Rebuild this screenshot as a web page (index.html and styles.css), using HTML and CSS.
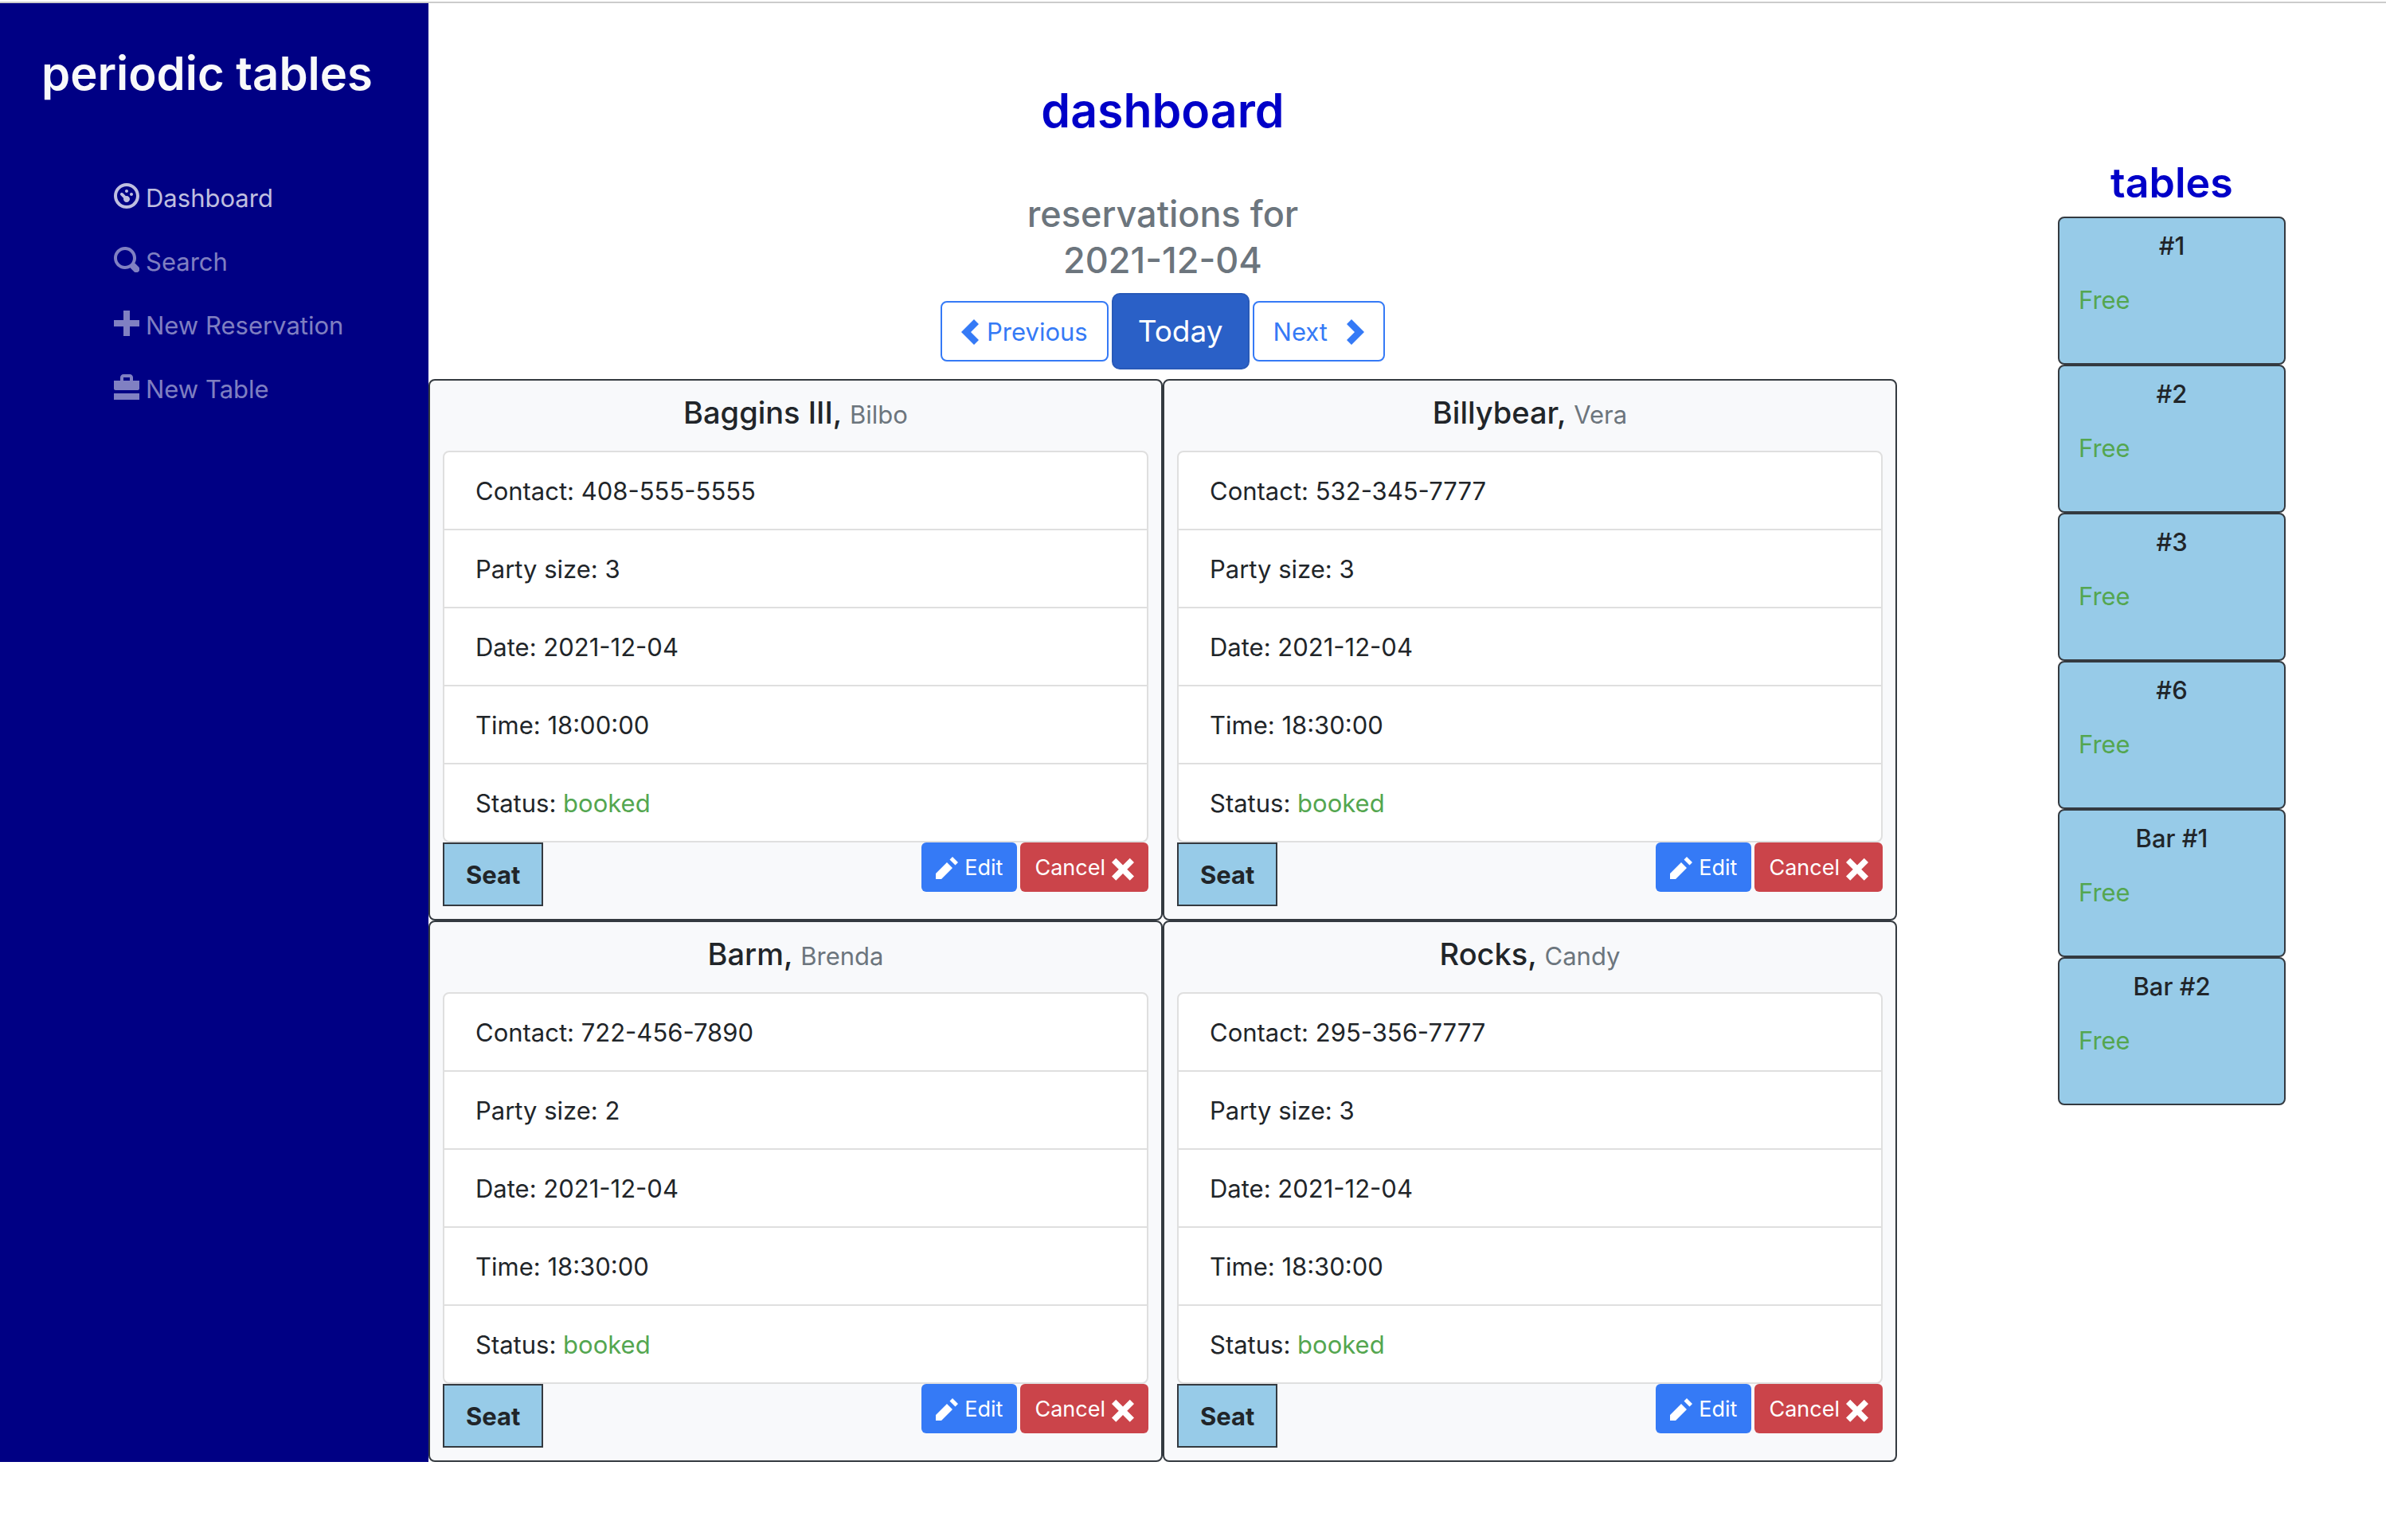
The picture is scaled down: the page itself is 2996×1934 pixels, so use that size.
FILE: index.html
```html
<!DOCTYPE html>
<html lang="en">
<head>
<meta charset="utf-8">
<meta name="viewport" content="width=device-width, initial-scale=1">
<title>Periodic Tables</title>
<link rel="stylesheet" href="styles.css">
</head>
<body>
<svg class="sprite" aria-hidden="true">
  <symbol id="i-dashboard" viewBox="0 0 8 8"><path d="M4 0c-2.2 0-4 1.8-4 4s1.8 4 4 4 4-1.8 4-4-1.8-4-4-4zm0 1c1.66 0 3 1.34 3 3s-1.34 3-3 3-3-1.34-3-3 1.34-3 3-3zm0 1c-.28 0-.5.22-.5.5s.22.5.5.5.5-.22.5-.5-.22-.5-.5-.5zm-1.66 1a.5.5 0 0 0-.19.84l.91.91c-.02.08-.06.16-.06.25 0 .55.45 1 1 1s1-.45 1-1-.45-1-1-1c-.09 0-.17.04-.25.06l-.91-.91a.5.5 0 0 0-.44-.16zm3.16 0c-.28 0-.5.22-.5.5s.22.5.5.5.5-.22.5-.5-.22-.5-.5-.5z"/></symbol>
  <symbol id="i-search" viewBox="0 0 8 8"><path d="M3.5 0c-1.93 0-3.5 1.57-3.5 3.5s1.57 3.5 3.5 3.5c.59 0 1.17-.14 1.66-.41a1 1 0 0 0 .13.13l1 1a1.02 1.02 0 1 0 1.44-1.44l-1-1a1 1 0 0 0-.16-.13c.27-.49.44-1.06.44-1.66 0-1.93-1.55-3.5-3.5-3.5zm0 1c1.39 0 2.5 1.11 2.5 2.5 0 .66-.24 1.27-.66 1.72l-.03.03a1 1 0 0 0-.13.13c-.44.4-1.04.63-1.69.63-1.39 0-2.5-1.11-2.5-2.5s1.11-2.5 2.5-2.5z"/></symbol>
  <symbol id="i-plus" viewBox="0 0 8 8"><path d="M3 0v3h-3v2h3v3h2v-3h3v-2h-3v-3h-2z"/></symbol>
  <symbol id="i-briefcase" viewBox="0 0 8 8"><path d="M3 0c-.55 0-1 .45-1 1v1h-2v2.5c0 .28.22.5.5.5h7c.28 0 .5-.22.5-.5v-2.5h-2v-1c0-.55-.45-1-1-1h-2zm0 1h2v1h-2v-1zm-3 5v2h8v-2h-8z"/></symbol>
  <symbol id="i-prev" viewBox="0 0 5.5 8"><path d="M4 0l-4 4 4 4 1.5-1.5-2.5-2.5 2.5-2.5-1.5-1.5z"/></symbol>
  <symbol id="i-next" viewBox="0 0 5.5 8"><path d="M1.5 0l-1.5 1.5 2.5 2.5-2.5 2.5 1.5 1.5 4-4-4-4z"/></symbol>
  <symbol id="i-pencil" viewBox="0 0 8 8"><path d="M6 0l-1 1 2 2 1-1-2-2zm-2 2l-4 4v2h2l4-4-2-2z"/></symbol>
  <symbol id="i-x" viewBox="0 -1 8 9"><path d="M1.5 0l-1.5 1.5 2.5 2.5-2.5 2.5 1.5 1.5 2.5-2.5 2.5 2.5 1.5-1.5-2.5-2.5 2.5-2.5-1.5-1.5-2.5 2.5-2.5-2.5z"/></symbol>
</svg>
<div class="app">
  <nav class="sidebar">
    <h1 class="brand">periodic tables</h1>
    <ul class="menu">
      <li><a class="menu-link active" href="#dashboard"><svg class="icon"><use href="#i-dashboard"/></svg>Dashboard</a></li>
      <li><a class="menu-link" href="#search"><svg class="icon"><use href="#i-search"/></svg>Search</a></li>
      <li><a class="menu-link" href="#new-reservation"><svg class="icon"><use href="#i-plus"/></svg>New Reservation</a></li>
      <li><a class="menu-link" href="#new-table"><svg class="icon"><use href="#i-briefcase"/></svg>New Table</a></li>
    </ul>
  </nav>

  <main class="main">
    <h2 class="page-title">dashboard</h2>
    <h3 class="subtitle">reservations for<br>2021-12-04</h3>
    <div class="pager">
      <button type="button" class="btn btn-outline btn-prev"><svg class="chevron"><use href="#i-prev"/></svg>Previous</button>
      <button type="button" class="btn btn-today">Today</button>
      <button type="button" class="btn btn-outline btn-next">Next<svg class="chevron"><use href="#i-next"/></svg></button>
    </div>
    <div class="cards">
      <article class="card">
        <h4 class="card-title">Baggins III, <small>Bilbo</small></h4>
        <ul class="details">
          <li>Contact: 408-555-5555</li>
          <li>Party size: 3</li>
          <li>Date: 2021-12-04</li>
          <li>Time: 18:00:00</li>
          <li>Status: <span class="ok">booked</span></li>
        </ul>
        <div class="actions">
          <a class="seat" href="#seat">Seat</a>
          <a class="btn-sm btn-edit" href="#edit"><svg class="icon-sm"><use href="#i-pencil"/></svg>Edit</a>
          <button type="button" class="btn-sm btn-cancel">Cancel<svg class="icon-x"><use href="#i-x"/></svg></button>
        </div>
      </article>
      <article class="card">
        <h4 class="card-title">Billybear, <small>Vera</small></h4>
        <ul class="details">
          <li>Contact: 532-345-7777</li>
          <li>Party size: 3</li>
          <li>Date: 2021-12-04</li>
          <li>Time: 18:30:00</li>
          <li>Status: <span class="ok">booked</span></li>
        </ul>
        <div class="actions">
          <a class="seat" href="#seat">Seat</a>
          <a class="btn-sm btn-edit" href="#edit"><svg class="icon-sm"><use href="#i-pencil"/></svg>Edit</a>
          <button type="button" class="btn-sm btn-cancel">Cancel<svg class="icon-x"><use href="#i-x"/></svg></button>
        </div>
      </article>
      <article class="card">
        <h4 class="card-title">Barm, <small>Brenda</small></h4>
        <ul class="details">
          <li>Contact: 722-456-7890</li>
          <li>Party size: 2</li>
          <li>Date: 2021-12-04</li>
          <li>Time: 18:30:00</li>
          <li>Status: <span class="ok">booked</span></li>
        </ul>
        <div class="actions">
          <a class="seat" href="#seat">Seat</a>
          <a class="btn-sm btn-edit" href="#edit"><svg class="icon-sm"><use href="#i-pencil"/></svg>Edit</a>
          <button type="button" class="btn-sm btn-cancel">Cancel<svg class="icon-x"><use href="#i-x"/></svg></button>
        </div>
      </article>
      <article class="card">
        <h4 class="card-title">Rocks, <small>Candy</small></h4>
        <ul class="details">
          <li>Contact: 295-356-7777</li>
          <li>Party size: 3</li>
          <li>Date: 2021-12-04</li>
          <li>Time: 18:30:00</li>
          <li>Status: <span class="ok">booked</span></li>
        </ul>
        <div class="actions">
          <a class="seat" href="#seat">Seat</a>
          <a class="btn-sm btn-edit" href="#edit"><svg class="icon-sm"><use href="#i-pencil"/></svg>Edit</a>
          <button type="button" class="btn-sm btn-cancel">Cancel<svg class="icon-x"><use href="#i-x"/></svg></button>
        </div>
      </article>
    </div>
  </main>

  <aside class="tables">
    <h3 class="tables-title">tables</h3>
    <section class="table-card"><h5>#1</h5><p class="ok">Free</p></section>
    <section class="table-card"><h5>#2</h5><p class="ok">Free</p></section>
    <section class="table-card"><h5>#3</h5><p class="ok">Free</p></section>
    <section class="table-card"><h5>#6</h5><p class="ok">Free</p></section>
    <section class="table-card"><h5>Bar #1</h5><p class="ok">Free</p></section>
    <section class="table-card"><h5>Bar #2</h5><p class="ok">Free</p></section>
  </aside>
</div>
</body>
</html>
```
FILE: styles.css
```css
* {
  box-sizing: border-box;
}

body {
  margin: 0;
  padding-top: 2px;
  background: #fff;
  color: #212529;
  font-family: Inter, "Liberation Sans", sans-serif;
  font-size: 31px;
  line-height: 48px;
}

h1, h2, h3, h4, h5, p, ul {
  margin: 0;
  padding: 0;
  font-weight: 500;
}

ul {
  list-style: none;
  font-weight: 400;
}

a {
  text-decoration: none;
}

svg {
  flex: none;
  fill: currentColor;
}

button {
  font-family: inherit;
  cursor: pointer;
}

.sprite {
  display: none;
}

.app {
  display: grid;
  grid-template-columns: 538fr 1844fr 614fr;
  border-top: 2px solid #ccc;
}

/* Sidebar */
.sidebar {
  padding: 50px 48px 0 52px;
  background: #000084;
}

.brand {
  color: #f8f9fa;
  font-size: 58px;
  font-weight: 600;
  line-height: 76px;
  white-space: nowrap;
}

.menu {
  margin-top: 79px;
  padding-left: 91px;
}

.menu-link {
  display: flex;
  align-items: flex-start;
  gap: 8px;
  padding: 16px 0;
  color: rgba(255, 255, 255, .5);
  white-space: nowrap;
}

.menu-link.active {
  color: rgba(255, 255, 255, .75);
}

.icon {
  width: 32px;
  height: 32px;
  margin-top: 5px;
}

/* Main column */
.main {
  text-align: center;
}

.page-title {
  padding-top: 97px;
  color: #0000c8;
  font-size: 59px;
  font-weight: 600;
  line-height: 76px;
}

.subtitle {
  margin-top: 63px;
  color: #6c757d;
  font-size: 45px;
  line-height: 58px;
}

.pager {
  display: flex;
  justify-content: center;
  align-items: center;
  gap: 4px;
  margin: 12px 0;
}

.btn {
  display: flex;
  align-items: center;
  border-radius: 8px;
  font-size: 31px;
  line-height: 48px;
}

.btn-outline {
  padding: 13px 24px 11px;
  border: 2px solid #357af6;
  background: #fff;
  color: #357af6;
}

.btn-prev {
  gap: 10px;
}

.btn-next {
  gap: 24px;
}

.btn-today {
  padding: 16px 31px;
  border: 2px solid #2859b8;
  border-radius: 10px;
  background: #2a60c7;
  color: #fff;
  font-size: 37px;
  line-height: 60px;
}

.chevron {
  width: 22px;
  height: 32px;
}

.cards {
  display: grid;
  grid-template-columns: 1fr 1fr;
  text-align: left;
}

.card {
  padding: 16px;
  border: 2px solid #343a40;
  border-radius: 8px;
  background: #f8f9fb;
}

.card-title {
  margin-bottom: 24px;
  font-size: 38px;
  line-height: 48px;
  text-align: center;
}

.card-title small {
  color: #6c757d;
  font-size: 31px;
  font-weight: 400;
  line-height: 1;
}

.details {
  border: 2px solid #dfdfdf;
  border-radius: 8px;
  background: #fff;
}

.details li {
  padding: 25px 39px 23px;
}

.details li + li {
  border-top: 2px solid #dfdfdf;
}

.ok {
  color: #54a650;
}

.actions {
  display: flex;
  align-items: flex-start;
  gap: 4px;
}

.seat {
  margin-right: auto;
  padding: 15px 27px 13px;
  border: 2px solid #343a40;
  background: #97cbe8;
  color: #212529;
  font-weight: 700;
}

.btn-sm {
  display: flex;
  align-items: center;
  gap: 8px;
  padding: 11px 18px 9px;
  border: 0;
  border-radius: 6px;
  color: #fff;
  font-size: 27px;
  line-height: 42px;
}

.btn-edit {
  background: #357af6;
}

.btn-cancel {
  background: #cb444a;
}

.icon-sm {
  width: 28px;
  height: 28px;
}

.icon-x {
  width: 28px;
  height: 32px;
}

/* Dining tables */
.tables {
  padding: 192px 126px 0 202px;
}

.tables-title {
  margin-bottom: 8px;
  color: #0000c8;
  font-size: 52px;
  font-weight: 600;
  line-height: 68px;
  text-align: center;
}

.table-card {
  padding: 15px 24px 55px;
  border: 2px solid #343a40;
  border-radius: 8px;
  background: #97cbe8;
}

.table-card h5 {
  margin-bottom: 24px;
  font-size: 31px;
  line-height: 40px;
  text-align: center;
}

.table-card p {
  font-weight: 400;
}
```
